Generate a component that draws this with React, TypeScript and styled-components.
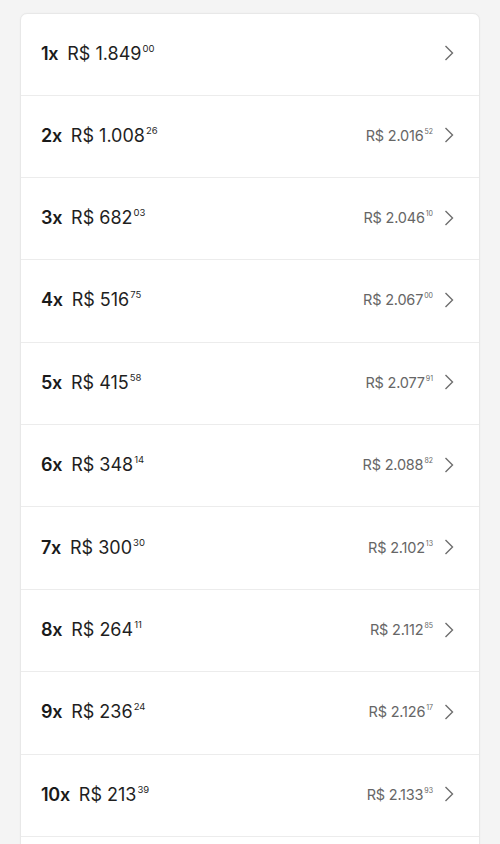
import React from "react";
import styled, { createGlobalStyle } from "styled-components";

const Global = createGlobalStyle`
  html, body { margin: 0; padding: 0; background: #f4f4f4; }
  body { font-family: Inter, Lato, "Open Sans", Arial, sans-serif; }
`;

const Page = styled.div`
  padding: 13px 20px 0 20px;
  height: 844px;
  box-sizing: border-box;
  overflow: hidden;
`;

const Card = styled.div`
  background: #fff;
  border: 1px solid #e8e8e8;
  border-radius: 7px;
  box-shadow: 0 0 2px rgba(0,0,0,0.04);
  overflow: hidden;
`;

const Row = styled.div`
  height: 82.4px;
  box-sizing: border-box;
  display: flex;
  align-items: center;
  padding: 0 25px 2px 20px;
  border-top: 1px solid #ececec;
  &:first-child { border-top: none; height: 80.5px; }
`;

const EmptyRow = styled.div`
  height: 40px;
  border-top: 1px solid #ececec;
`;

const Count = styled.span`
  font-size: 18px;
  font-weight: 600;
  color: #1a1a1a;
  margin-right: 9px;
  letter-spacing: -0.3px;
`;

const Price = styled.span`
  font-size: 18px;
  font-weight: 400;
  color: #1f1f1f;
  display: inline-flex;
  align-items: flex-start;
`;

const Cents = styled.sup<{ $small?: boolean }>`
  font-size: ${(p) => (p.$small ? "7px" : "9.5px")};
  line-height: 1;
  vertical-align: top;
  margin-left: 1px;
  margin-top: 1px;
  letter-spacing: 0;
`;

const Spacer = styled.div`
  flex: 1;
`;

const Total = styled.span`
  font-size: 14.5px;
  color: #666;
  display: inline-flex;
  align-items: flex-start;
  margin-right: 11px;
  letter-spacing: -0.2px;
`;

const Chevron = styled.svg`
  width: 10px;
  height: 16px;
  flex: none;
`;

const rows: [string, string, string, string, string][] = [
  ["1x", "1.849", "00", "", ""],
  ["2x", "1.008", "26", "2.016", "52"],
  ["3x", "682", "03", "2.046", "10"],
  ["4x", "516", "75", "2.067", "00"],
  ["5x", "415", "58", "2.077", "91"],
  ["6x", "348", "14", "2.088", "82"],
  ["7x", "300", "30", "2.102", "13"],
  ["8x", "264", "11", "2.112", "85"],
  ["9x", "236", "24", "2.126", "17"],
  ["10x", "213", "39", "2.133", "93"],
];

export default function App() {
  return (
    <>
      <Global />
      <Page>
        <Card>
          {rows.map(([n, v, c, t, tc]) => (
            <Row key={n}>
              <Count>{n}</Count>
              <Price>
                R$ {v}
                <Cents>{c}</Cents>
              </Price>
              <Spacer />
              {t && (
                <Total>
                  R$ {t}
                  <Cents $small>{tc}</Cents>
                </Total>
              )}
              <Chevron viewBox="0 0 10 16">
                <path d="M1.5 1 L8.5 8 L1.5 15" fill="none" stroke="#6e6e6e" strokeWidth="1.4" />
              </Chevron>
            </Row>
          ))}
          <EmptyRow />
        </Card>
      </Page>
    </>
  );
}
